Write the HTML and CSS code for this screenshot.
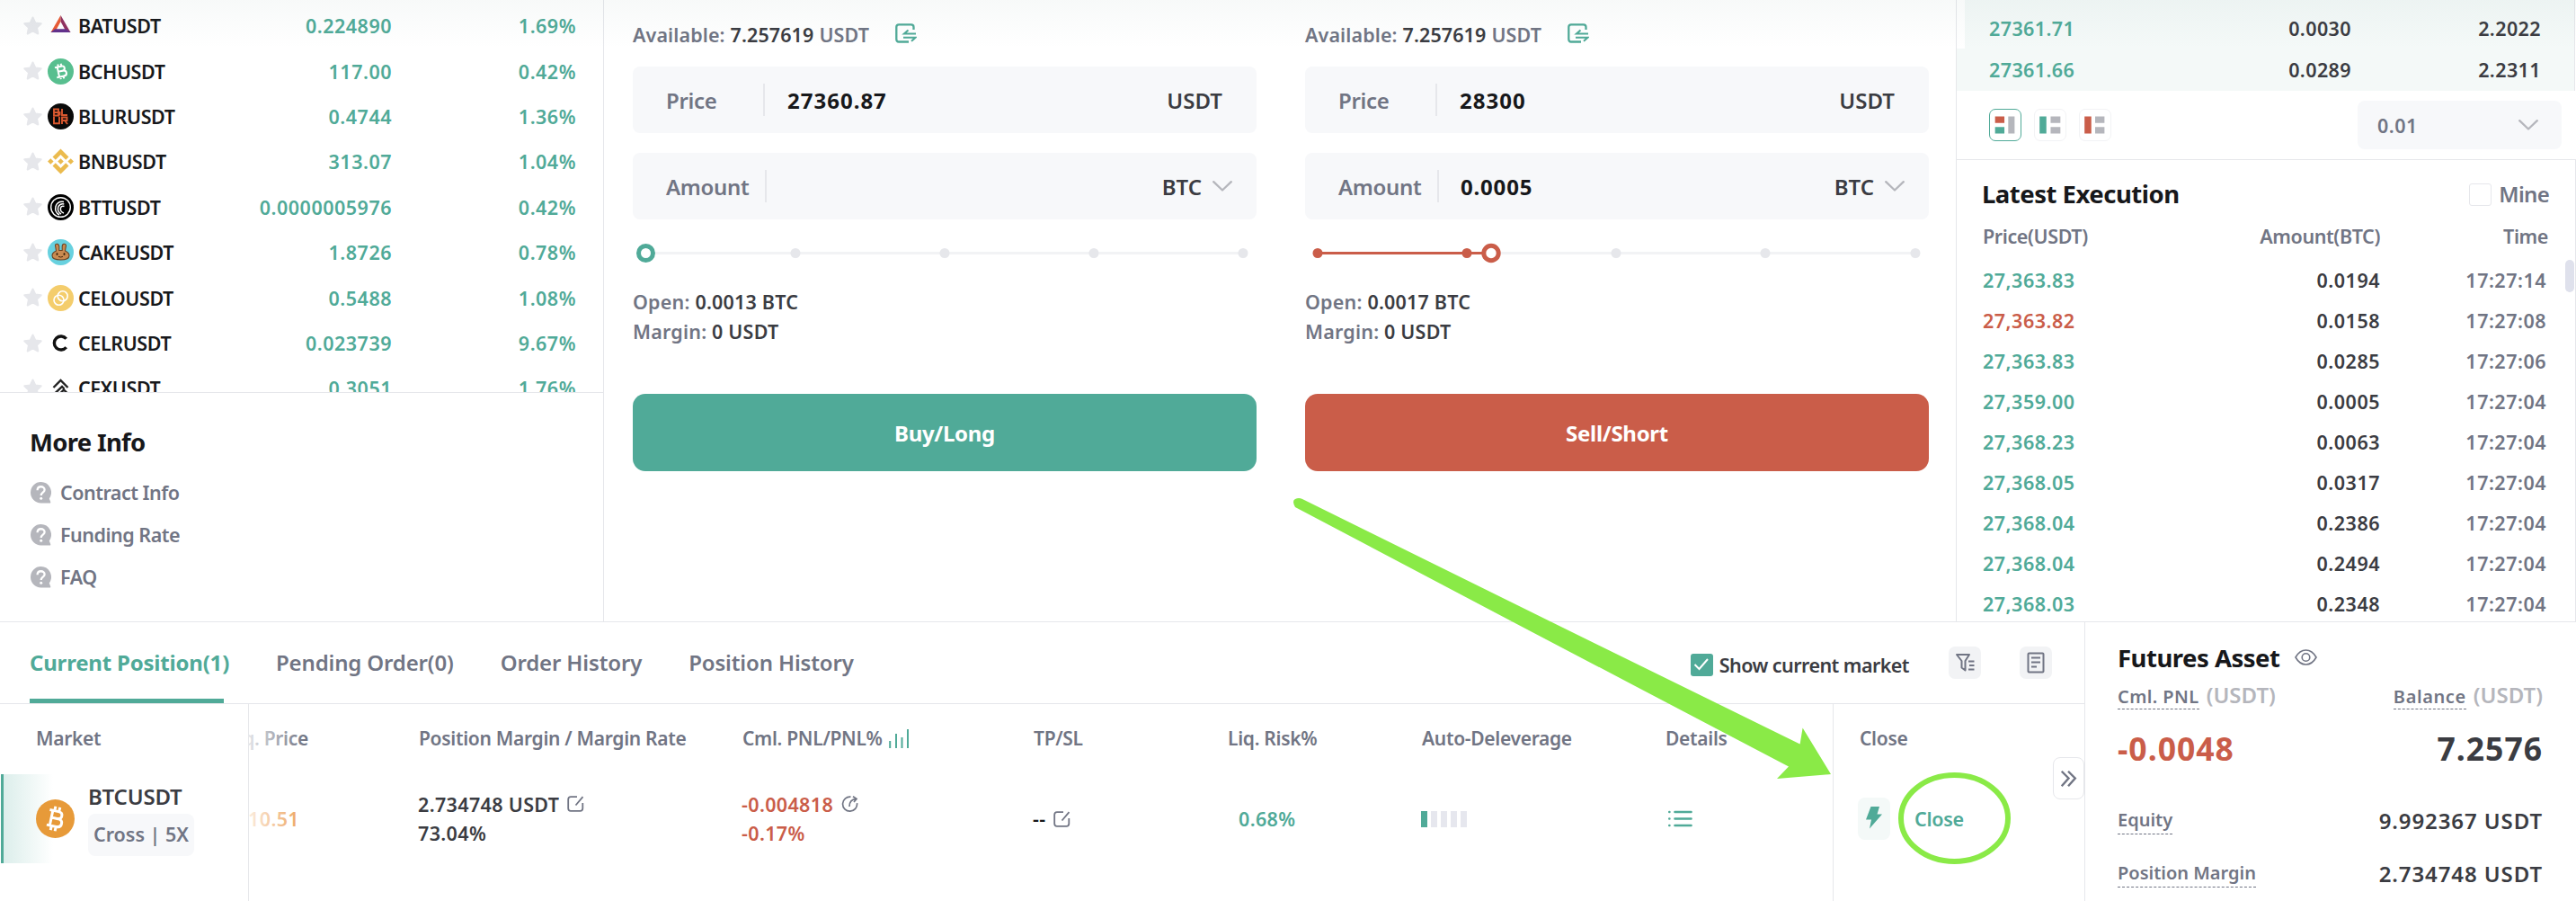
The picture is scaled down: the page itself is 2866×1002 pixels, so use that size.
FILE: index.html
```
<!DOCTYPE html>
<html lang="en">
<head>
  <meta charset="UTF-8">
  <meta name="viewport" content="width=device-width, initial-scale=1.0">
  <title>BTCUSDT Futures</title>
  <link rel="stylesheet" href="styles.css">
</head>
<body>
  <!-- shared icons -->
  <svg class="defs" width="0" height="0">
    <symbol id="star" viewBox="0 0 21 22">
      <path d="M10.5 1.5l2.800 6 6.400.8-4.700 4.500 1.300 6.700-5.800-3.200-5.800 3.200 1.300-6.700L1.300 8.300l6.400-.8z" fill="#e6e7eb" stroke="#e6e7eb" stroke-width="2" stroke-linejoin="round"/>
    </symbol>
    <symbol id="help" viewBox="0 0 23 24">
      <path d="M11.5 0a11.5 11.7 0 0 1 9.3 18.5l1.4 3.6q.4 1.5-1 1.5l-9.700-.2A11.5 11.7 0 0 1 11.500 0z" fill="#b5b6bc"/>
      <path d="M7.600 9.200c0-5.200 8-5.200 8-.4 0 2.900-3.900 3-3.900 6.200" fill="none" stroke="#fff" stroke-width="2.300"/>
      <circle cx="11.700" cy="18.300" r="1.500" fill="#fff"/>
    </symbol>
    <symbol id="transfer" viewBox="0 0 24 22">
      <path d="M20.500 7V4q0-2.700-2.700-2.700H4Q1.300 1.300 1.300 4v13.500q0 3 2.700 3h11" fill="none" stroke="#50aa98" stroke-width="2.300"/>
      <path d="M23 11.500H10l4.500-4M9 15.800h13.500l-4.500 4" fill="none" stroke="#50aa98" stroke-width="2.100"/>
    </symbol>
    <symbol id="down" viewBox="0 0 22 12">
      <path d="M1.200 1.200L11 10.500l9.800-9.300" fill="none" stroke="#b5b6bc" stroke-width="2.300" stroke-linecap="round" stroke-linejoin="round"/>
    </symbol>
    <symbol id="edit" viewBox="0 0 19 18">
      <path d="M11 1.200H4Q1.200 1.200 1.200 4v10q0 2.800 2.800 2.800h10.500q2.800 0 2.800-2.800V8M17.500 1.200L9.500 10.500" fill="none" stroke="#717584" stroke-width="1.800"/>
    </symbol>
  </svg>

  <div class="top">
    <div class="markets">
      <div class="market-list">
        <div class="market-row">
          <svg class="star"><use href="#star"/></svg>
          <svg class="coin" viewBox="0 0 29 29">
            <path d="M14.500 3L3.500 22h4.500l6.500-12z" fill="#ea5b35"/>
            <path d="M14.500 3l11 19H21l-6.500-12z" fill="#91305f"/>
            <path d="M3.500 22h22l-4.500-3.700H8z" fill="#62308c"/>
          </svg>
          <span class="name">BATUSDT</span><span class="num">0.224890</span><span class="num">1.69%</span>
        </div>
        <div class="market-row">
          <svg class="star"><use href="#star"/></svg>
          <svg class="coin" viewBox="0 0 29 29">
            <circle cx="14.500" cy="14.500" r="14.500" fill="#58bf8f"/>
            <g transform="rotate(-12 14.500 14.500)" fill="none" stroke="#fff" stroke-width="2">
              <path d="M9 9h7.500q3 0 3 2.600t-3 2.600H11.500h5.500q3.500 0 3.500 3t-3.500 3H9M11.800 9v11M13 6v3M16.500 6v3M13 20v3M16.500 20v3"/>
            </g>
          </svg>
          <span class="name">BCHUSDT</span><span class="num">117.00</span><span class="num">0.42%</span>
        </div>
        <div class="market-row">
          <svg class="star"><use href="#star"/></svg>
          <svg class="coin" viewBox="0 0 29 29">
            <circle cx="14.500" cy="14.500" r="14.500" fill="#0a0a0a"/>
            <path d="M7 6.500h5v7H7zM7 10h6.500v3.500M16 6v7h6M7 14.800v7.500h6v-7.500M16 23v-7.500h5.500v3.500H16M19 19l3 4" fill="none" stroke="#d9582f" stroke-width="1.900"/>
          </svg>
          <span class="name">BLURUSDT</span><span class="num">0.4744</span><span class="num">1.36%</span>
        </div>
        <div class="market-row">
          <svg class="star"><use href="#star"/></svg>
          <svg class="coin" viewBox="0 0 29 29" fill="#ebbb4e">
            <path d="M14.500.5l9 9-3.300 3.300-5.700-5.700-5.700 5.700L5.500 9.500zM14.500 28.500l9-9-3.300-3.300-5.700 5.700-5.700-5.700-3.300 3.300zM3.300 11.200l3.300 3.300-3.300 3.300L0 14.500zM25.700 11.200l3.300 3.300-3.300 3.300-3.300-3.300zM14.500 11.200l3.300 3.300-3.300 3.300-3.300-3.300z"/>
          </svg>
          <span class="name">BNBUSDT</span><span class="num">313.07</span><span class="num">1.04%</span>
        </div>
        <div class="market-row">
          <svg class="star"><use href="#star"/></svg>
          <svg class="coin" viewBox="0 0 29 29">
            <circle cx="14.500" cy="14.500" r="14.500" fill="#000"/>
            <g fill="none" stroke="#fff">
              <circle cx="14.500" cy="14.500" r="10.800" stroke-width="1.400"/>
              <path d="M13 23q-5.500-3-4-9.500Q11 7.500 18 8.500M15 22q-4.500-2.500-3.200-8 2-4 6.500-3M18 21q-4.500-1.500-3.500-6 1-2.500 4-1.500" stroke-width="1.500"/>
            </g>
          </svg>
          <span class="name">BTTUSDT</span><span class="num">0.0000005976</span><span class="num">0.42%</span>
        </div>
        <div class="market-row">
          <svg class="star"><use href="#star"/></svg>
          <svg class="coin" viewBox="0 0 29 29">
            <circle cx="14.500" cy="14.500" r="14.500" fill="#68d1df"/>
            <path d="M9.500 13L8.500 7q0-2 2-1.800T12.800 8v4.500h3.400V8q0-2.600 2-2.800t2.300 1.800l-1 6q4.500 2 4.500 5.300 0 4.700-9.500 4.700T5 18.300Q5 15 9.500 13z" fill="#c98a50" stroke="#6c4425" stroke-width="1.100"/>
            <ellipse cx="10.500" cy="16.500" rx="1" ry="1.500" fill="#42260f"/>
            <ellipse cx="18.500" cy="16.500" rx="1" ry="1.500" fill="#42260f"/>
            <path d="M12 19.300q2.500 1.500 5 0" fill="none" stroke="#42260f"/>
          </svg>
          <span class="name">CAKEUSDT</span><span class="num">1.8726</span><span class="num">0.78%</span>
        </div>
        <div class="market-row">
          <svg class="star"><use href="#star"/></svg>
          <svg class="coin" viewBox="0 0 29 29">
            <circle cx="14.500" cy="14.500" r="14.500" fill="#f4cd6c"/>
            <circle cx="12.500" cy="16.700" r="5.500" fill="none" stroke="#fff" stroke-width="1.600"/>
            <circle cx="16.700" cy="12.300" r="5.500" fill="none" stroke="#fff" stroke-width="1.600"/>
          </svg>
          <span class="name">CELOUSDT</span><span class="num">0.5488</span><span class="num">1.08%</span>
        </div>
        <div class="market-row">
          <svg class="star"><use href="#star"/></svg>
          <svg class="coin" viewBox="0 0 29 29">
            <path d="M20.700 9.800a7.500 7.500 0 1 0 0 9.400" fill="none" stroke="#111" stroke-width="3.400"/>
          </svg>
          <span class="name">CELRUSDT</span><span class="num">0.023739</span><span class="num">9.67%</span>
        </div>
        <div class="market-row">
          <svg class="star"><use href="#star"/></svg>
          <svg class="coin" viewBox="0 0 29 29">
            <path d="M6.500 14l8-8 8 8M7 21.500l9-8.500 2.500 2.500M13 21.500l5-5 4 4" fill="none" stroke="#222" stroke-width="2.400"/>
          </svg>
          <span class="name">CFXUSDT</span><span class="num">0.3051</span><span class="num">1.76%</span>
        </div>
      </div>
      <div class="more-info">
        <h3>More Info</h3>
        <a class="info-link"><svg><use href="#help"/></svg>Contract Info</a>
        <a class="info-link"><svg><use href="#help"/></svg>Funding Rate</a>
        <a class="info-link"><svg><use href="#help"/></svg>FAQ</a>
      </div>
    </div>

    <div class="forms">
      <div class="form">
        <div class="available">Available: <b>7.257619</b> USDT <svg><use href="#transfer"/></svg></div>
        <div class="field"><span class="label">Price</span><span class="value">27360.87</span><span class="unit">USDT</span></div>
        <div class="field amount"><span class="label">Amount</span><span class="value"></span><span class="unit">BTC</span><svg class="down"><use href="#down"/></svg></div>
        <svg class="slider" viewBox="0 0 694 75">
          <path d="M14 37.500h665" stroke="#f2f3f5" stroke-width="3"/>
          <g fill="#e6e7eb">
            <circle cx="181" cy="37.500" r="5.500"/><circle cx="347" cy="37.500" r="5.500"/><circle cx="513" cy="37.500" r="5.500"/><circle cx="679" cy="37.500" r="5.500"/>
          </g>
          <circle cx="14.500" cy="37.500" r="8" fill="#fff" stroke="#50aa98" stroke-width="5"/>
        </svg>
        <div class="line">Open: <b>0.0013 BTC</b></div>
        <div class="line">Margin: <b>0 USDT</b></div>
        <button class="buy">Buy/Long</button>
      </div>
      <div class="form">
        <div class="available">Available: <b>7.257619</b> USDT <svg><use href="#transfer"/></svg></div>
        <div class="field"><span class="label">Price</span><span class="value">28300</span><span class="unit">USDT</span></div>
        <div class="field amount"><span class="label">Amount</span><span class="value">0.0005</span><span class="unit">BTC</span><svg class="down"><use href="#down"/></svg></div>
        <svg class="slider" viewBox="0 0 694 75">
          <path d="M14 37.500h665" stroke="#f2f3f5" stroke-width="3"/>
          <path d="M14 37.500h193" stroke="#ca5d49" stroke-width="3"/>
          <g fill="#e6e7eb">
            <circle cx="346" cy="37.500" r="5.500"/><circle cx="512" cy="37.500" r="5.500"/><circle cx="679" cy="37.500" r="5.500"/>
          </g>
          <circle cx="14" cy="37.500" r="5.500" fill="#ca5d49"/><circle cx="180" cy="37.500" r="5.500" fill="#ca5d49"/>
          <circle cx="207" cy="37.500" r="8.200" fill="#fff" stroke="#ca5d49" stroke-width="5"/>
        </svg>
        <div class="line">Open: <b>0.0017 BTC</b></div>
        <div class="line">Margin: <b>0 USDT</b></div>
        <button class="sell">Sell/Short</button>
      </div>
    </div>

    <div class="book">
      <div class="order first"><span class="green">27361.71</span><span>0.0030</span><span>2.2022</span></div>
      <div class="order"><span class="green">27361.66</span><span>0.0289</span><span>2.2311</span></div>
      <div class="book-tools">
        <svg class="depth on" viewBox="0 0 36 36"><path d="M6 8h11v7.500H6z" fill="#ca5d49"/><path d="M6 20.500h11V28H6z" fill="#50aa98"/><path d="M21.500 8h7.500v20h-7.500z" fill="#b5b6bc"/></svg>
        <svg class="depth" viewBox="0 0 36 36"><path d="M5.500 8h8v20h-8z" fill="#50aa98"/><path d="M18.500 8h11.500v7.500H18.500zM18.500 20.500h11.500V28H18.500z" fill="#b5b6bc"/></svg>
        <svg class="depth" viewBox="0 0 36 36"><path d="M5.500 8h8v20h-8z" fill="#ca5d49"/><path d="M18 8h11v7.500H18zM18 20.500h11V28H18z" fill="#b5b6bc"/></svg>
        <div class="precision">0.01<svg class="down"><use href="#down"/></svg></div>
      </div>
      <div class="exec">
        <div class="exec-title"><h3>Latest Execution</h3><span class="check"></span><span class="mine">Mine</span></div>
        <div class="exec-head"><span>Price(USDT)</span><span>Amount(BTC)</span><span>Time</span></div>
        <div class="trades">
          <div class="trade"><span class="green">27,363.83</span><span>0.0194</span><span>17:27:14</span></div>
          <div class="trade"><span class="red">27,363.82</span><span>0.0158</span><span>17:27:08</span></div>
          <div class="trade"><span class="green">27,363.83</span><span>0.0285</span><span>17:27:06</span></div>
          <div class="trade"><span class="green">27,359.00</span><span>0.0005</span><span>17:27:04</span></div>
          <div class="trade"><span class="green">27,368.23</span><span>0.0063</span><span>17:27:04</span></div>
          <div class="trade"><span class="green">27,368.05</span><span>0.0317</span><span>17:27:04</span></div>
          <div class="trade"><span class="green">27,368.04</span><span>0.2386</span><span>17:27:04</span></div>
          <div class="trade"><span class="green">27,368.04</span><span>0.2494</span><span>17:27:04</span></div>
          <div class="trade"><span class="green">27,368.03</span><span>0.2348</span><span>17:27:04</span></div>
          <div class="thumb"></div>
        </div>
      </div>
    </div>
    <div class="shade"></div>
  </div>

  <div class="bottom">
    <div class="positions">
      <div class="tabs">
        <span class="tab active">Current Position(1)</span>
        <span class="tab">Pending Order(0)</span>
        <span class="tab">Order History</span>
        <span class="tab">Position History</span>
        <div class="tools">
          <svg class="checked" viewBox="0 0 25 25"><rect width="25" height="25" rx="3" fill="#50aa98"/><path d="M4.500 12l5 5L19 6" fill="none" stroke="#fff" stroke-width="2"/></svg>
          <span class="show">Show current market</span>
          <svg class="tool" viewBox="0 0 36 36" fill="none" stroke="#717584" stroke-width="2"><path d="M9 9h14l-4.500 7v10.500l-4-3V16z" stroke-linejoin="round"/><path d="M22 16.500h6.500M23 21h5.500M22 25.500h6.500"/></svg>
          <svg class="tool" viewBox="0 0 36 36" fill="none" stroke="#717584" stroke-width="2"><rect x="9.500" y="7.500" width="17" height="21" rx="1"/><path d="M13 12.500h10M13 17.500h10M13 22.500h6"/></svg>
        </div>
      </div>
      <div class="table">
        <div class="col-market">
          <div class="th">Market</div>
          <div class="market-cell">
            <svg class="btc" viewBox="0 0 43 43">
              <circle cx="21.500" cy="21.500" r="21.500" fill="#e79a39"/>
              <g transform="rotate(12 21.500 21.500)" fill="none" stroke="#fff" stroke-width="3">
                <path d="M13.500 13h10q4.500 0 4.500 4t-4.500 4H17h7.500q5 0 5 4.500t-5 4.500h-11M17 13v17M19 8v5M24 8v5M19 30v5M24 30v5"/>
              </g>
            </svg>
            <div class="pair"><span>BTCUSDT</span><em>Cross | 5X</em></div>
          </div>
        </div>
        <div class="grid">
          <div class="th liq"><span>Liq. Price</span></div>
          <div class="th">Position Margin / Margin Rate</div>
          <div class="th">Cml. PNL/PNL%<svg class="bars" viewBox="0 0 22 21"><path d="M1.200 21v-8M8 21V5M14.500 21V9M21 21V0" stroke="#50aa98" stroke-width="2"/></svg></div>
          <div class="th">TP/SL</div>
          <div class="th">Liq. Risk%</div>
          <div class="th">Auto-Deleverage</div>
          <div class="th">Details</div>

          <div class="td liq price"><span>210.51</span></div>
          <div class="td two"><span>2.734748 USDT<svg class="edit"><use href="#edit"/></svg></span><span>73.04%</span></div>
          <div class="td two red"><span>-0.004818<svg class="edit" viewBox="0 0 19 18" fill="none" stroke="#717584" stroke-width="1.700"><path d="M10.500 1.200a8 8 0 1 0 7 7M9 12q0-8 7.500-8.500M13 .8l4 2.700-3 3.500"/></svg></span><span>-0.17%</span></div>
          <div class="td"><span class="dash">--</span><svg class="edit"><use href="#edit"/></svg></div>
          <div class="td green risk">0.68%</div>
          <div class="td adl"><i class="on"></i><i></i><i></i><i></i><i></i></div>
          <div class="td"><svg class="list" viewBox="0 0 27 19" stroke="#50aa98" stroke-width="2.600" stroke-linecap="round"><path d="M7.500 2h18M7.500 9.500h18M7.500 17h18M1.300 2h.1M1.300 9.500h.1M1.300 17h.1"/></svg></div>
          <div class="fade"></div>
        </div>
        <div class="col-close">
          <div class="th">Close</div>
          <div class="close-cell">
            <svg class="bolt" viewBox="0 0 36 47"><path d="M14.500 10h9.500l-2.500 8.500H27L13 34.500l2-10H9z" fill="#50aa98"/></svg>
            <span>Close</span>
          </div>
          <svg class="expand" viewBox="0 0 34 46"><path d="M9 15l8 8-8 9M16.500 15l8 8-8 9" fill="none" stroke="#717584" stroke-width="2.500"/></svg>
        </div>
      </div>
    </div>
    <div class="asset">
      <div class="asset-title"><h3>Futures Asset</h3><svg viewBox="0 0 25 18" fill="none" stroke="#717584" stroke-width="1.600"><path d="M1 9Q5.500 1 12.500 1T24 9q-4.500 8-11.500 8T1 9z"/><circle cx="12.500" cy="9" r="4.300"/></svg></div>
      <div class="asset-head"><u>Cml. PNL</u><em>(USDT)</em><u class="balance">Balance</u><em>(USDT)</em></div>
      <div class="asset-big"><span class="red">-0.0048</span><span>7.2576</span></div>
      <div class="asset-row"><u>Equity</u><span>9.992367 USDT</span></div>
      <div class="asset-row"><u>Position Margin</u><span>2.734748 USDT</span></div>
    </div>
  </div>

  <!-- pointer to the close button -->
  <svg class="pointer" viewBox="0 0 2866 1002">
    <path d="M1441 564q-4-7 0-9 4-2 8 0L1722.600 690l280 137.500L2005.600 809.500 2037 861l-60 5 13-13.500L1680 690z" fill="#8aea47"/>
    <ellipse cx="2174.500" cy="910" rx="59.500" ry="48" fill="none" stroke="#8aea47" stroke-width="6"/>
  </svg>
</body>
</html>
```
FILE: styles.css
```
* {
  box-sizing: border-box;
}
body {
  margin: 0;
  width: 2866px;
  height: 1002px;
  overflow: hidden;
  position: relative;
  background: #fff;
  color: #3b3c42;
  font-family: "Noto Sans", "Open Sans", sans-serif;
  font-size: 21.5px;
  font-weight: 570;
  white-space: nowrap;
}
h3 {
  margin: 0;
  font-size: 27.5px;
  font-weight: 700;
  color: #17181b;
  letter-spacing: -0.5px;
}
b {
  font-weight: 570;
  color: #3b3c42;
}
em {
  font-style: normal;
}
.defs {
  position: absolute;
}
.green {
  color: #50aa98;
}
.red {
  color: #ca5d49;
}
.top {
  display: flex;
  height: 691px;
  overflow: hidden;
  position: relative;
}
.shade {
  position: absolute;
  top: 0;
  left: 0;
  width: 100%;
  height: 54px;
  background: linear-gradient(rgba(60, 110, 100, 0.04), rgba(60, 110, 100, 0));
}

/* markets */
.markets {
  width: 672px;
  border-right: 1px solid #e6e7eb;
}
.market-list {
  height: 437px;
  padding: 3.6px 0 0 26px;
  overflow: hidden;
  border-bottom: 1px solid #e6e7eb;
}
.market-row {
  display: grid;
  grid-template-columns: 21px 29px 170px 172px 199px;
  column-gap: 6px;
  align-items: center;
  height: 50.4px;
}
.star {
  width: 21px;
  height: 22px;
}
.coin {
  width: 29px;
  height: 29px;
}
.name {
  margin-left: -1px;
  color: #17181b;
  letter-spacing: -0.4px;
}
.num {
  color: #50aa98;
  text-align: right;
  letter-spacing: 0.5px;
}
.more-info {
  padding: 31px 0 0 33px;
}
.more-info h3 {
  line-height: 48px;
  margin-bottom: 8px;
  letter-spacing: -0.7px;
}
.info-link {
  display: flex;
  align-items: center;
  gap: 10px;
  height: 47px;
  padding-left: 1px;
  color: #717584;
  letter-spacing: -0.5px;
}
.info-link svg {
  width: 23px;
  height: 24px;
}

/* order forms */
.forms {
  display: flex;
  gap: 54px;
  width: 1504px;
  padding-left: 32px;
}
.form {
  width: 694px;
}
.available {
  display: flex;
  align-items: center;
  height: 74px;
  padding-top: 2px;
  gap: 6px;
  color: #717584;
  letter-spacing: 0.1px;
}
.available svg {
  width: 24px;
  height: 22px;
  margin: -2px 0 0 23px;
}
.field {
  display: flex;
  align-items: center;
  height: 74px;
  margin-bottom: 22px;
  padding: 0 38px 0 37px;
  background: #f7f8fa;
  border-radius: 8px;
  font-size: 24px;
}
.field .label {
  width: 108px;
  color: #717584;
  letter-spacing: -0.3px;
}
.field .value {
  display: flex;
  align-items: center;
  flex: 1;
  height: 36px;
  padding-left: 25px;
  border-left: 2px solid #e6e7eb;
  color: #17181b;
  font-weight: 700;
  letter-spacing: 1px;
}
.field.amount {
  margin-bottom: 0;
  padding-right: 27px;
}
.field.amount .label {
  width: 110px;
}
.field.amount .value {
  padding-left: 24px;
  letter-spacing: 0.8px;
}
.down {
  width: 22px;
  height: 12px;
  margin-left: 12px;
}
.slider {
  display: block;
  width: 694px;
  height: 75px;
}
.line {
  line-height: 33px;
  color: #717584;
  letter-spacing: 0.2px;
}
.form button {
  display: block;
  width: 100%;
  height: 86px;
  margin-top: 53px;
  border: none;
  border-radius: 14px;
  color: #fff;
  font: 700 24px "Noto Sans", sans-serif;
  letter-spacing: -0.3px;
}
.buy {
  background: #50aa98;
}
.sell {
  background: #ca5d49;
}

/* order book */
.book {
  width: 690px;
  border-left: 1px solid #e6e7eb;
}
.order {
  display: grid;
  grid-template-columns: 150px 253px 211px;
  align-items: center;
  height: 47px;
  width: 688px;
  padding-left: 36px;
  background: #f4f9f8;
  border-right: 1px solid #e6e7eb;
  letter-spacing: 0.4px;
}
.order.first {
  height: 54px;
  width: 679px;
  margin-left: 9px;
  padding: 8px 0 0 27px;
}
.order span + span {
  text-align: right;
}
.book-tools {
  display: flex;
  align-items: center;
  gap: 14px;
  height: 76px;
  padding: 0 16px 0 36px;
}
.depth {
  width: 36px;
  height: 36px;
  border: 1px solid #f2f3f5;
  border-radius: 7px;
}
.depth.on {
  border-color: #50aa98;
}
.precision {
  display: flex;
  align-items: center;
  justify-content: space-between;
  width: 227px;
  height: 54px;
  margin-left: auto;
  padding: 0 26px 0 22px;
  background: #f7f8fa;
  border-radius: 8px;
  color: #717584;
  letter-spacing: 0.5px;
}
.exec {
  height: 520px;
  border-top: 1px solid #e6e7eb;
  border-right: 1px solid #e6e7eb;
}
.exec-title {
  display: flex;
  align-items: center;
  height: 62px;
  padding: 12px 29px 0 28px;
}
.check {
  width: 25px;
  height: 25px;
  margin: 2px 8px 0 auto;
  border: 1px solid #e6e7eb;
  border-radius: 3px;
}
.mine {
  font-size: 24px;
  color: #717584;
  letter-spacing: -0.7px;
}
.exec-head,
.trade {
  display: grid;
  grid-template-columns: 200px 242px 185px;
  align-items: center;
  padding-left: 29px;
}
.exec-head {
  height: 44px;
  grid-template-columns: 200px 242px 187px;
  color: #717584;
  letter-spacing: -0.4px;
}
.trades {
  position: relative;
  padding-top: 5px;
}
.trade {
  height: 45px;
  letter-spacing: 0.5px;
}
.trade span + span,
.exec-head span + span {
  text-align: right;
}
.trade span:last-child {
  color: #717584;
}
.thumb {
  position: absolute;
  top: 5px;
  right: 1px;
  width: 10px;
  height: 36px;
  border-radius: 5px;
  background: #dfe1ec;
}

/* positions */
.bottom {
  display: flex;
  height: 311px;
  border-top: 1px solid #e6e7eb;
}
.positions {
  width: 2320px;
  border-right: 1px solid #e6e7eb;
}
.tabs {
  display: flex;
  align-items: center;
  gap: 52px;
  height: 91px;
  padding: 0 36px 0 33px;
  border-bottom: 1px solid #e6e7eb;
  font-size: 24px;
  color: #717584;
}
.tab {
  position: relative;
  line-height: 90px;
  letter-spacing: -0.15px;
}
.tab.active {
  width: 222px;
  color: #50aa98;
  font-weight: 700;
  letter-spacing: -0.2px;
}
.tab.active::after {
  content: "";
  position: absolute;
  left: 0;
  bottom: 0;
  width: 216px;
  height: 5px;
  background: #50aa98;
}
.tools {
  display: flex;
  align-items: center;
  margin-left: auto;
}
.checked {
  width: 25px;
  height: 25px;
  margin: 4px 7px 0 0;
}
.show {
  margin: 4px 44px 0 0;
  font-size: 21.5px;
  color: #3b3c42;
  letter-spacing: -0.55px;
}
.tool {
  width: 36px;
  height: 36px;
  margin-right: 43px;
  background: #f2f3f5;
  border-radius: 7px;
}
.tool:last-child {
  margin-right: 0;
}
.table {
  display: flex;
  height: 220px;
}
.th {
  display: flex;
  align-items: center;
  height: 78px;
  padding-bottom: 2px;
  margin-left: -1px;
  font-size: 21px;
  color: #717584;
  letter-spacing: -0.3px;
}
.col-market {
  width: 277px;
  border-right: 1px solid #e6e7eb;
}
.col-market .th {
  padding-left: 41px;
}
.market-cell {
  display: flex;
  align-items: center;
  gap: 15px;
  height: 99px;
  margin-left: 1px;
  padding-left: 36px;
  border-left: 3px solid #50aa98;
  background: linear-gradient(90deg, #dceeeb, rgba(255, 255, 255, 0) 55px);
}
.btc {
  width: 43px;
  height: 43px;
}
.pair span {
  display: block;
  height: 36px;
  line-height: 34px;
  font-size: 24px;
  letter-spacing: -0.2px;
}
.pair em {
  display: block;
  width: 118px;
  height: 47px;
  line-height: 46px;
  text-align: center;
  background: #f7f8fa;
  border-radius: 8px;
  color: #717584;
}
.grid {
  display: grid;
  position: relative;
  grid-template-columns: 190px 360px 324px 216px 216px 271px 185px;
  grid-template-rows: 78px 99px;
  width: 1762px;
  overflow: hidden;
}
.liq {
  justify-content: flex-end;
  width: 67px;
  overflow: hidden;
}
.liq.price {
  width: 58px;
  color: #ec9f55;
}
.fade {
  position: absolute;
  left: 0;
  top: 0;
  width: 62px;
  height: 100%;
  background: linear-gradient(90deg, rgba(255, 255, 255, 0.8), rgba(255, 255, 255, 0));
}
.td {
  display: flex;
  align-items: center;
  margin-left: -2px;
  letter-spacing: 0.35px;
}
.td.two {
  flex-direction: column;
  align-items: flex-start;
  justify-content: center;
}
.td.two span {
  display: flex;
  align-items: center;
  height: 32.5px;
}
.edit {
  width: 19px;
  height: 18px;
  margin-left: 9px;
}
.dash {
  font-weight: 600;
  color: #17181b;
}
.bars {
  width: 22px;
  height: 21px;
  margin-left: 7px;
}
.risk {
  padding-left: 13px;
}
.adl {
  gap: 4px;
}
.adl i {
  width: 7px;
  height: 18px;
  background: #e6e7ee;
}
.adl i.on {
  background: #50aa98;
}
.list {
  width: 27px;
  height: 19px;
  margin-left: 4px;
}
.col-close {
  position: relative;
  flex: 1;
  padding-left: 27px;
  border-left: 1px solid #e6e7eb;
}
.col-close .th {
  padding-left: 3px;
}
.close-cell {
  display: flex;
  align-items: center;
  gap: 27px;
  height: 99px;
  color: #50aa98;
  letter-spacing: -0.3px;
}
.bolt {
  width: 36px;
  height: 47px;
  background: #f4f9f8;
  border-radius: 8px;
}
.expand {
  position: absolute;
  top: 59px;
  right: 0;
  width: 35px;
  height: 47px;
  background: #fff;
  border: 1px solid #e6e7eb;
  border-radius: 8px;
}

/* asset */
.asset {
  flex: 1;
  padding: 17px 37px 0 36px;
}
.asset-title {
  display: flex;
  align-items: center;
  height: 44px;
}
.asset-title svg {
  width: 25px;
  height: 18px;
  margin-left: 17px;
}
.asset u {
  font-size: 20px;
  color: #717584;
  text-decoration: none;
  border-bottom: 1px dashed #717584;
  line-height: 30px;
}
.asset-head {
  display: flex;
  align-items: center;
  height: 39px;
}
.asset-head u {
  line-height: 26px;
  margin-top: 5px;
  letter-spacing: 0.4px;
}
.asset-head em {
  margin-left: 8px;
  font-size: 24px;
  color: #b5b6bc;
}
.asset-head .balance {
  margin-left: auto;
  letter-spacing: 0.6px;
}
.asset-big {
  display: flex;
  align-items: center;
  justify-content: space-between;
  height: 80px;
  margin-bottom: 11px;
  font-size: 35.5px;
  font-weight: 700;
  letter-spacing: 1px;
}
.asset-row {
  display: flex;
  align-items: center;
  justify-content: space-between;
  height: 59px;
}
.asset-row span {
  font-size: 24px;
  letter-spacing: 0.9px;
}

.pointer {
  position: absolute;
  left: 0;
  top: 0;
  width: 2866px;
  height: 1002px;
}
```
